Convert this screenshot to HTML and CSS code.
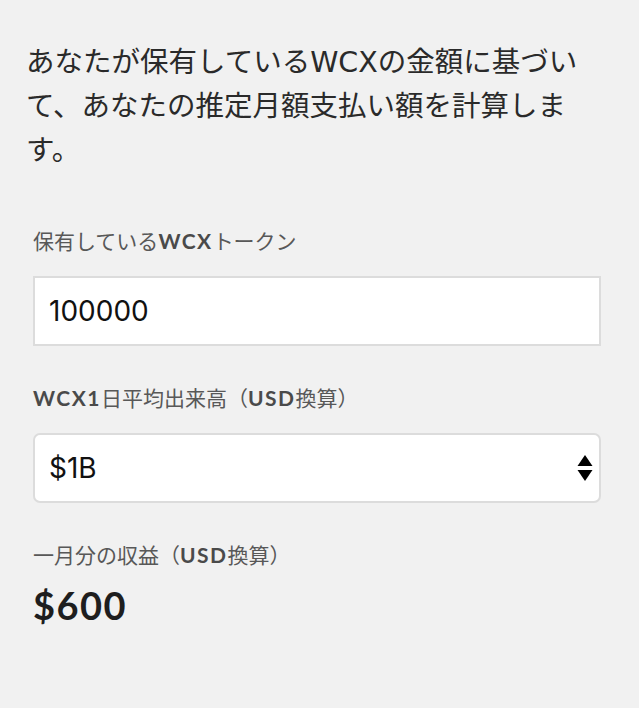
FILE: index.html
```html
<!DOCTYPE html>
<html lang="ja">
<head>
<meta charset="utf-8">
<title>WCX 収益計算</title>
<link rel="stylesheet" href="styles.css">
</head>
<body>
<main class="calc">
  <p class="intro">あなたが保有しているWCXの金額に基づいて、あなたの推定月額支払い額を計算します。</p>
  <form class="fields">
    <label class="field-label" for="tokens">保有している<b>WCX</b>トークン</label>
    <input class="text-input" id="tokens" type="text" value="100000">
    <label class="field-label" for="volume"><b>WCX1</b>日平均出来高（<b>USD</b>換算）</label>
    <div class="select-wrap">
      <select class="select" id="volume">
        <option>$1B</option>
      </select>
      <svg class="select-arrows" width="16" height="28" viewBox="0 0 16 28" aria-hidden="true">
        <polygon points="8,0 15.5,11 0.5,11" fill="#000"/>
        <polygon points="0.5,15 15.5,15 8,26" fill="#000"/>
      </svg>
    </div>
    <div class="field-label field-label--result">一月分の収益（<b>USD</b>換算）</div>
    <div class="result">$600</div>
  </form>
</main>
</body>
</html>
```

FILE: styles.css
```css
html, body {
  margin: 0;
  padding: 0;
  background: #f1f1f1;
}

.calc {
  padding: 41px 38px 0 26px;
}

.intro {
  margin: 0;
  width: 566px;
  font-family: "DejaVu Sans", "Noto Sans CJK JP", sans-serif;
  font-size: 28.5px;
  line-height: 44px;
  color: #2a2a2a;
}

.fields {
  display: flex;
  flex-direction: column;
  margin: 52px 0 0;
  padding-left: 7px;
}

.field-label {
  display: block;
  font-family: "Noto Sans CJK JP", sans-serif;
  font-size: 21px;
  line-height: 30px;
  color: #585858;
  margin-bottom: 20px;
}

.field-label b {
  font-family: Lato, sans-serif;
  font-weight: 700;
  letter-spacing: 1.5px;
  color: #4a4a4a;
}

.field-label--result {
  margin-bottom: 12px;
}

.text-input,
.select {
  display: block;
  width: 100%;
  height: 70px;
  box-sizing: border-box;
  margin: 0;
  padding: 0 14px;
  border: 2px solid #dcdcdc;
  background: #fff;
  font-family: Inter, "Liberation Sans", sans-serif;
  font-size: 28px;
  color: #111;
  outline: none;
}

.text-input {
  border-radius: 0;
  margin-bottom: 36px;
}

.select-wrap {
  position: relative;
  margin-bottom: 36px;
}

.select {
  border-radius: 7px;
  -webkit-appearance: none;
  appearance: none;
}

.select-arrows {
  position: absolute;
  right: 8px;
  top: 22px;
  pointer-events: none;
}

.result {
  font-family: Lato, sans-serif;
  font-weight: 700;
  font-size: 38px;
  line-height: 46px;
  letter-spacing: 1.5px;
  color: #1e1e1e;
}
```
